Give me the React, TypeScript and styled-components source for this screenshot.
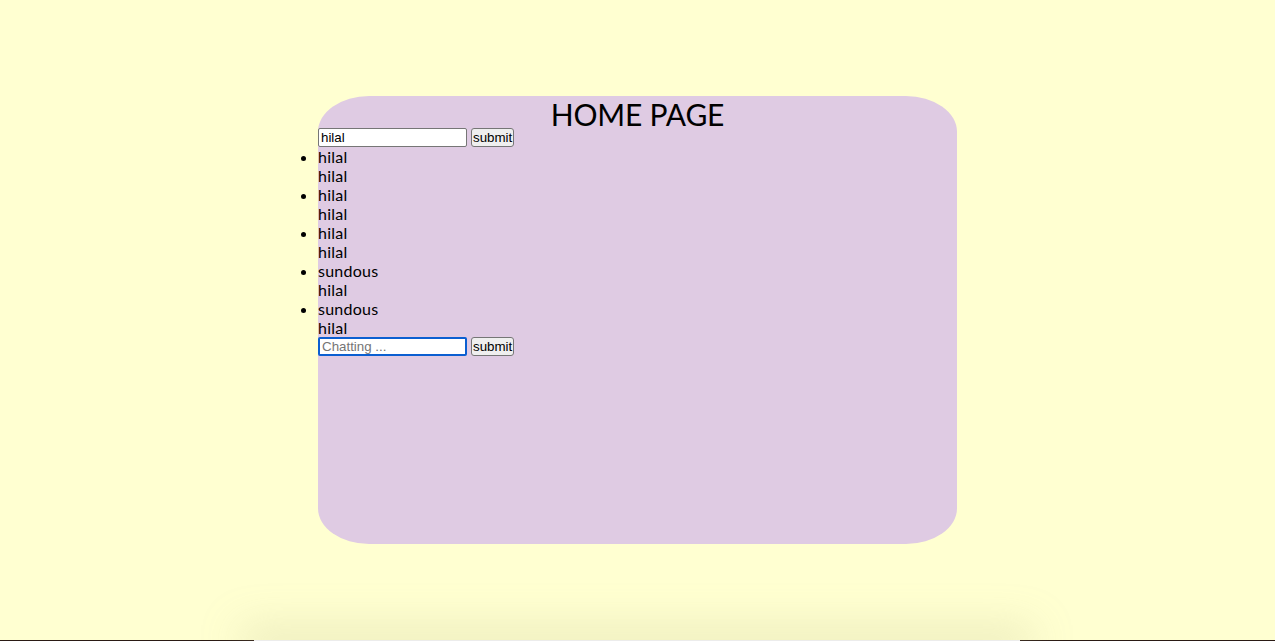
import React from "react";
import styled, { createGlobalStyle } from "styled-components";

const Global = createGlobalStyle`
  html, body { margin: 0; padding: 0; }
  body {
    background: #ffffd1;
    font-family: Lato, "Noto Sans", sans-serif;
    height: 641px;
    overflow: hidden;
  }
`;

const Page = styled.div`
  display: flex;
  justify-content: center;
  padding-top: 96px;
`;

const Panel = styled.main`
  width: 639px;
  height: 448px;
  background: #dfcbe3;
  border-radius: 8%;
  color: #000;
`;

const Title = styled.h1`
  margin: 0;
  padding-top: 4px;
  font-family: Lato, "Noto Sans", sans-serif;
  font-weight: 400;
  font-size: 30px;
  line-height: 28px;
  text-align: center;
  letter-spacing: -0.2px;
`;

const Form = styled.form`
  display: flex;
  align-items: center;
  gap: 4px;
  height: 19px;
`;

const Input = styled.input<{ $focused?: boolean }>`
  box-sizing: border-box;
  width: 149px;
  height: 19px;
  margin: 0;
  padding: 1px 2px;
  font-family: "Liberation Sans", Arial, sans-serif;
  font-size: 13.33px;
  color: #000;
  background: #fff;
  border: ${(p) => (p.$focused ? "2px solid #0b5fd1" : "1px solid #767676")};
  border-radius: 2px;
  outline: none;
  &::placeholder { color: #757575; }
`;

const Button = styled.button`
  box-sizing: border-box;
  height: 19px;
  width: 43px;
  margin: 0;
  padding: 0 1px;
  font-family: "Liberation Sans", Arial, sans-serif;
  font-size: 13.33px;
  line-height: 15px;
  color: #000;
  background: #efefef;
  border: 1px solid #767676;
  border-radius: 3px;
`;

const List = styled.ul`
  margin: 0;
  padding: 0;
  list-style: disc outside;
`;

const Item = styled.li`
  font-size: 16px;
  line-height: 19px;
  letter-spacing: 0.25px;
`;

const Line = styled.div`
  font-size: 16px;
  line-height: 19px;
`;

const BottomShadow = styled.div`
  position: fixed;
  left: 254px;
  right: 255px;
  bottom: -1px;
  height: 2px;
  background: #ececec;
  box-shadow: 0 0 40px 12px rgba(190, 190, 140, 0.35);
`;

const BottomEdge = styled.div`
  position: fixed;
  left: 0;
  right: 0;
  bottom: 0;
  height: 1px;
  background: #2a1a14;
`;

const messages = [
  { user: "hilal", text: "hilal" },
  { user: "hilal", text: "hilal" },
  { user: "hilal", text: "hilal" },
  { user: "sundous", text: "hilal" },
  { user: "sundous", text: "hilal" },
];

export default function App() {
  return (
    <>
      <Global />
      <Page>
        <Panel>
          <Title>HOME PAGE</Title>
          <Form onSubmit={(e) => e.preventDefault()}>
            <Input defaultValue="hilal" />
            <Button type="submit">submit</Button>
          </Form>
          <List>
            {messages.map((m, i) => (
              <Item key={i}>
                {m.user}
                <Line>{m.text}</Line>
              </Item>
            ))}
          </List>
          <Form onSubmit={(e) => e.preventDefault()}>
            <Input $focused placeholder="Chatting ..." />
            <Button type="submit">submit</Button>
          </Form>
        </Panel>
      </Page>
      <BottomEdge />
      <BottomShadow />
    </>
  );
}
